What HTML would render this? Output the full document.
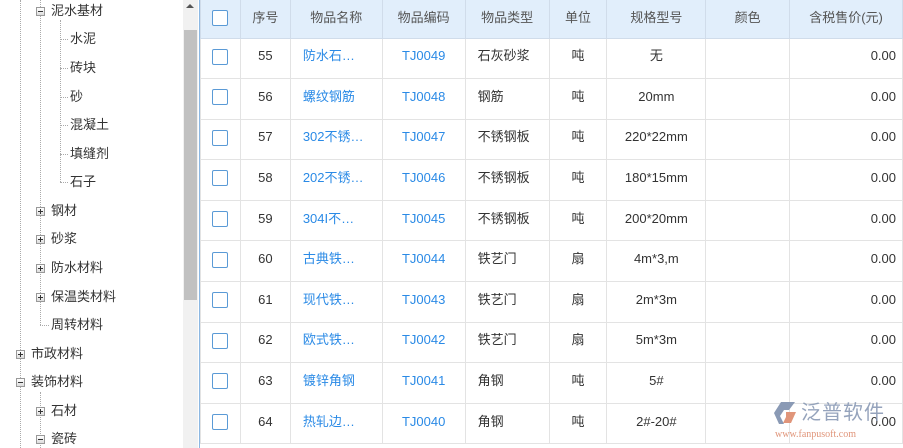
<!DOCTYPE html>
<html><head><meta charset="utf-8"><style>
*{margin:0;padding:0;box-sizing:border-box}
html,body{width:903px;height:448px;overflow:hidden}
body{background:#fff;font-family:"Liberation Sans","Noto Sans CJK SC",sans-serif;font-size:13px;color:#333;position:relative}
#w{position:absolute;left:0;top:0;width:903px;height:448px;overflow:hidden}
.t{position:absolute;white-space:nowrap;line-height:16px}
.ic{position:absolute;width:9px;height:9px;border:1px solid #999;background:linear-gradient(#fff,#ddd);}
.ic:before{content:"";position:absolute;left:1px;top:3px;width:5px;height:1px;background:#333}
.ic.p:after{content:"";position:absolute;left:3px;top:1px;width:1px;height:5px;background:#333}
.vl{position:absolute;border-left:1px dotted #aaa}
.hl{position:absolute;border-top:1px dotted #aaa;height:0}
table{position:absolute;left:200px;top:0;border-collapse:collapse;table-layout:fixed}
td,th{border:1px solid #e3e3e3;height:40.6px;text-align:center;font-weight:normal;white-space:nowrap;overflow:hidden;line-height:16px;padding:0 0 4px 0}
th{background:#e1eefb;color:#555;height:38px;border-color:#d0dcea;border-top:none;padding-bottom:2px}
td.l{text-align:left;padding-left:12px}
td.b{color:#2a8ae6}
td.r{text-align:right;padding-right:6px}
.cb{display:inline-block;width:16px;height:16px;border:1px solid #5a9ad6;border-radius:2px;vertical-align:middle;background:#fff}
</style></head><body><div id="w">
<div class="vl" style="left:20px;top:0;height:448px"></div>
<div class="vl" style="left:40px;top:0;height:325px"></div>
<div class="vl" style="left:40px;top:392px;height:56px"></div>
<div class="vl" style="left:60px;top:20px;height:162px"></div>
<div class="ic" style="left:36px;top:7px"></div><div class="t" style="left:51px;top:3px">泥水基材</div>
<div class="hl" style="left:60px;top:39px;width:8px"></div><div class="t" style="left:70px;top:31px">水泥</div>
<div class="hl" style="left:60px;top:68px;width:8px"></div><div class="t" style="left:70px;top:60px">砖块</div>
<div class="hl" style="left:60px;top:97px;width:8px"></div><div class="t" style="left:70px;top:89px">砂</div>
<div class="hl" style="left:60px;top:125px;width:8px"></div><div class="t" style="left:70px;top:117px">混凝土</div>
<div class="hl" style="left:60px;top:154px;width:8px"></div><div class="t" style="left:70px;top:146px">填缝剂</div>
<div class="hl" style="left:60px;top:182px;width:8px"></div><div class="t" style="left:70px;top:174px">石子</div>
<div class="ic p" style="left:36px;top:207px"></div><div class="t" style="left:51px;top:203px">钢材</div>
<div class="ic p" style="left:36px;top:235px"></div><div class="t" style="left:51px;top:231px">砂浆</div>
<div class="ic p" style="left:36px;top:264px"></div><div class="t" style="left:51px;top:260px">防水材料</div>
<div class="ic p" style="left:36px;top:293px"></div><div class="t" style="left:51px;top:289px">保温类材料</div>
<div class="hl" style="left:40px;top:325px;width:9px"></div><div class="t" style="left:51px;top:317px">周转材料</div>
<div class="ic p" style="left:16px;top:350px"></div><div class="t" style="left:31px;top:346px">市政材料</div>
<div class="ic" style="left:16px;top:378px"></div><div class="t" style="left:31px;top:374px">装饰材料</div>
<div class="ic p" style="left:36px;top:407px"></div><div class="t" style="left:51px;top:403px">石材</div>
<div class="ic" style="left:36px;top:435px"></div><div class="t" style="left:51px;top:431px">瓷砖</div>
<div style="position:absolute;left:183px;top:0;width:15px;height:448px;background:#f1f1f1"></div>
<div style="position:absolute;left:186px;top:4px;width:0;height:0;border-left:4px solid transparent;border-right:4px solid transparent;border-bottom:4px solid #555"></div>
<div style="position:absolute;left:184px;top:30px;width:13px;height:270px;background:#c1c1c1"></div>
<div style="position:absolute;left:199px;top:0;width:1px;height:448px;background:#8cb8e3"></div>
<table>
<colgroup><col style="width:40px"><col style="width:50px"><col style="width:92px"><col style="width:83px"><col style="width:84px"><col style="width:58px"><col style="width:99px"><col style="width:84px"><col style="width:113px"></colgroup>
<tr><th><span class="cb"></span></th><th>序号</th><th>物品名称</th><th>物品编码</th><th>物品类型</th><th>单位</th><th>规格型号</th><th>颜色</th><th>含税售价(元)</th></tr>
<tr><td><span class="cb"></span></td><td>55</td><td class="l b">防水石…</td><td class="b">TJ0049</td><td class="l">石灰砂浆</td><td>吨</td><td>无</td><td></td><td class="r">0.00</td></tr>
<tr><td><span class="cb"></span></td><td>56</td><td class="l b">螺纹钢筋</td><td class="b">TJ0048</td><td class="l">钢筋</td><td>吨</td><td>20mm</td><td></td><td class="r">0.00</td></tr>
<tr><td><span class="cb"></span></td><td>57</td><td class="l b">302不锈…</td><td class="b">TJ0047</td><td class="l">不锈钢板</td><td>吨</td><td>220*22mm</td><td></td><td class="r">0.00</td></tr>
<tr><td><span class="cb"></span></td><td>58</td><td class="l b">202不锈…</td><td class="b">TJ0046</td><td class="l">不锈钢板</td><td>吨</td><td>180*15mm</td><td></td><td class="r">0.00</td></tr>
<tr><td><span class="cb"></span></td><td>59</td><td class="l b">304I不…</td><td class="b">TJ0045</td><td class="l">不锈钢板</td><td>吨</td><td>200*20mm</td><td></td><td class="r">0.00</td></tr>
<tr><td><span class="cb"></span></td><td>60</td><td class="l b">古典铁…</td><td class="b">TJ0044</td><td class="l">铁艺门</td><td>扇</td><td>4m*3,m</td><td></td><td class="r">0.00</td></tr>
<tr><td><span class="cb"></span></td><td>61</td><td class="l b">现代铁…</td><td class="b">TJ0043</td><td class="l">铁艺门</td><td>扇</td><td>2m*3m</td><td></td><td class="r">0.00</td></tr>
<tr><td><span class="cb"></span></td><td>62</td><td class="l b">欧式铁…</td><td class="b">TJ0042</td><td class="l">铁艺门</td><td>扇</td><td>5m*3m</td><td></td><td class="r">0.00</td></tr>
<tr><td><span class="cb"></span></td><td>63</td><td class="l b">镀锌角钢</td><td class="b">TJ0041</td><td class="l">角钢</td><td>吨</td><td>5#</td><td></td><td class="r">0.00</td></tr>
<tr><td><span class="cb"></span></td><td>64</td><td class="l b">热轧边…</td><td class="b">TJ0040</td><td class="l">角钢</td><td>吨</td><td>2#-20#</td><td></td><td class="r">0.00</td></tr>
</table>
<svg style="position:absolute;left:773px;top:400px" width="26" height="26" viewBox="0 0 26 26"><path d="M8 2h14l-6 8H11l-4 6 4 8H6L1 13z" fill="#8a9ab5"/><path d="M13 12h10l-5 11h-8l3-6z" fill="#e0957a"/></svg>
<div class="t" style="left:801px;top:402px;font-size:20px;line-height:22px;color:#8a9ab5;opacity:.9;letter-spacing:1px">泛普软件</div>
<div class="t" style="left:775px;top:429px;font-size:10px;line-height:12px;color:#e0957a;font-family:'Liberation Serif',serif">www.fanpusoft.com</div>
</div></body></html>
